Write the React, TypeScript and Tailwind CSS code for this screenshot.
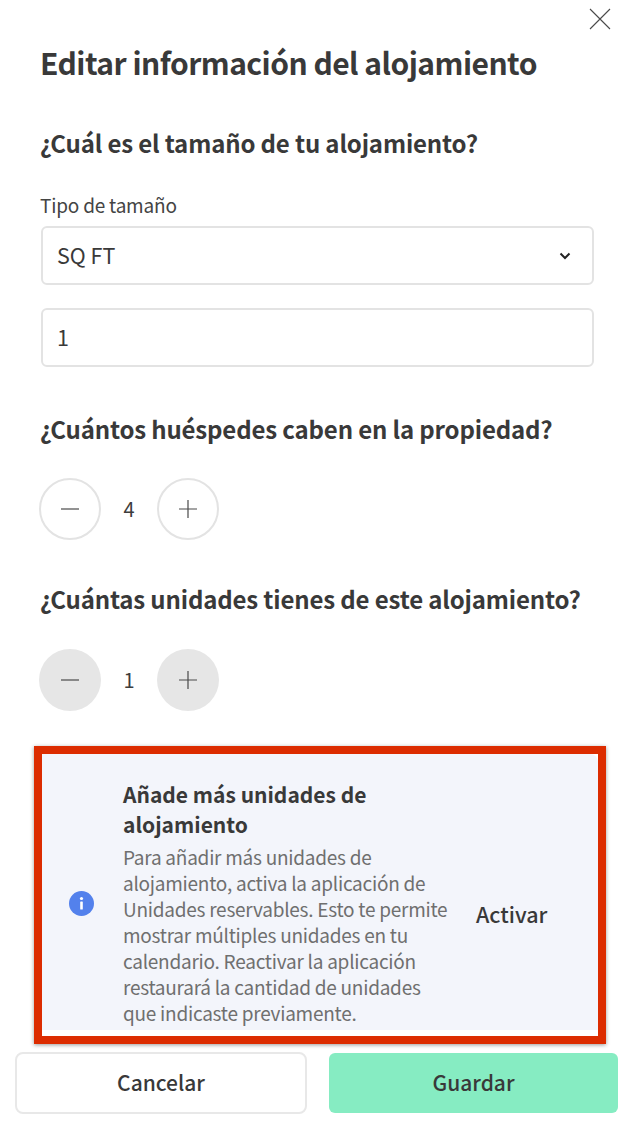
const font = { fontFamily: '"Noto Sans CJK JP", "Noto Sans", sans-serif' };

function Stepper({ value, disabled }: { value: number; disabled?: boolean }) {
  const btn = disabled
    ? 'w-[62px] h-[62px] rounded-full bg-[#e6e6e6] flex items-center justify-center'
    : 'w-[62px] h-[62px] rounded-full border-2 border-[#e3e3e3] bg-white flex items-center justify-center';
  return (
    <div className="flex items-center -ml-[2px]">
      <div className={btn}>
        <svg width="20" height="20" viewBox="0 0 20 20" stroke="#4a4a4a" strokeWidth="1.2">
          <path d="M1 10h18" />
        </svg>
      </div>
      <div className="w-[56px] text-center text-[20px] leading-[30px] text-[#3d3d3d]">{value}</div>
      <div className={btn}>
        <svg width="20" height="20" viewBox="0 0 20 20" stroke="#4a4a4a" strokeWidth="1.2">
          <path d="M1 10h18M10 1v18" />
        </svg>
      </div>
    </div>
  );
}

export default function App() {
  return (
    <div className="relative w-[640px] h-[1128px] bg-white overflow-hidden text-[#393939]" style={font}>
      <button className="absolute top-[8px] left-[589px]">
        <svg width="22" height="22" viewBox="0 0 22 22" stroke="#4a4a4a" strokeWidth="1.1" fill="none">
          <path d="M1 1l20 20M21 1L1 21" />
        </svg>
      </button>

      <div className="pl-[41px] pr-[46px] pt-[39px]">
        <h1 className="-ml-px text-[30px] leading-[46px] font-bold tracking-[-0.53px]">Editar información del alojamiento</h1>

        <h2 className="-ml-px mt-[40px] text-[24px] leading-[36px] font-bold tracking-[-0.15px]">¿Cuál es el tamaño de tu alojamiento?</h2>

        <div className="-ml-px mt-[30px] text-[19px] leading-[28px] tracking-[-0.2px] text-[#444444]">Tipo de tamaño</div>
        <div className="mt-[7px] h-[59px] border-2 border-[#e3e3e3] rounded-[6px] flex items-center justify-between pl-[14px] pr-[21px] text-[21.5px]">
          <span>SQ FT</span>
          <svg width="12" height="8" viewBox="0 0 12 8" stroke="#222222" strokeWidth="2" fill="none">
            <path d="M1.5 1.5L6 6l4.5-4.5" />
          </svg>
        </div>
        <div className="mt-[23px] h-[59px] border-2 border-[#e3e3e3] rounded-[6px] flex items-center pl-[14px] text-[21.5px]">1</div>

        <h2 className="-ml-px mt-[44px] text-[24px] leading-[36px] font-bold tracking-[-0.15px] whitespace-nowrap">¿Cuántos huéspedes caben en la propiedad?</h2>
        <div className="mt-[31px]">
          <Stepper value={4} />
        </div>

        <h2 className="-ml-px mt-[41px] text-[24px] leading-[36px] font-bold tracking-[-0.15px] whitespace-nowrap">¿Cuántas unidades tienes de este alojamiento?</h2>
        <div className="mt-[32px]">
          <Stepper value={1} disabled />
        </div>
      </div>

      <div className="mt-[35px] ml-[34px] w-[572px] h-[298px] border-[8px] border-[#dc2c00] bg-white shadow-[0_1px_4px_rgba(0,0,0,0.4)]">
        <div className="h-[276px] bg-[#f3f5fb] rounded-tr-[8px] flex items-center pt-[22px] pl-[27px]">
          <svg width="25" height="25" viewBox="0 0 25 25" className="shrink-0">
            <circle cx="12.5" cy="12.5" r="12.5" fill="#5381ec" />
            <circle cx="12.5" cy="7.5" r="1.6" fill="#ffffff" />
            <rect x="11.2" y="10.5" width="2.6" height="8" rx="0.6" fill="#ffffff" />
          </svg>
          <div className="ml-[29px] w-[330px] shrink-0">
            <div className="text-[21px] leading-[29.5px] font-bold">Añade más unidades de alojamiento</div>
            <p className="mt-[5px] text-[19px] leading-[25.9px] tracking-[-0.25px] text-[#6f6f6f]">
              Para añadir más unidades de alojamiento, activa la aplicación de Unidades reservables. Esto te permite mostrar múltiples unidades en tu calendario. Reactivar la aplicación restaurará la cantidad de unidades que indicaste previamente.
            </p>
          </div>
          <div className="ml-[23px] text-[21.5px] leading-[30px] mt-[21px] font-medium">Activar</div>
        </div>
      </div>

      <div className="mt-[8px] pl-[15px] flex items-center">
        <button className="w-[292px] h-[62px] border-2 border-[#e8e8e8] rounded-[8px] bg-white text-[21px] font-medium">Cancelar</button>
        <button className="ml-[22px] w-[289px] h-[60px] rounded-[6px] bg-[#86ecc2] text-[21px] font-medium">Guardar</button>
      </div>
    </div>
  );
}
